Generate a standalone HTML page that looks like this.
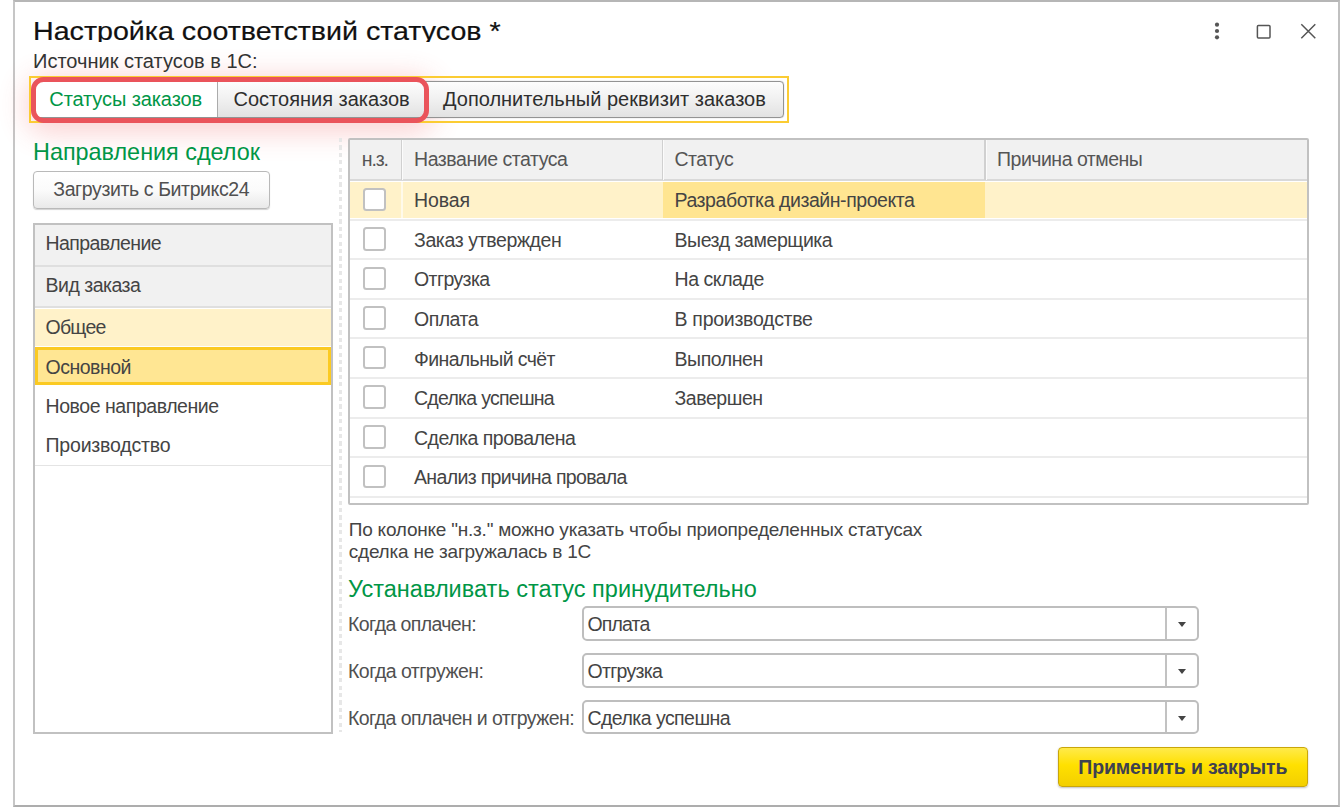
<!DOCTYPE html>
<html lang="ru"><head><meta charset="utf-8"><title>Настройка соответствий статусов</title>
<style>
html,body{margin:0;padding:0;background:#fff}
body{width:1340px;height:807px;position:relative;overflow:hidden;font-family:"Liberation Sans",sans-serif}
div{box-sizing:border-box}
.t{position:absolute;white-space:nowrap;line-height:1}
.win{position:absolute;left:13px;top:0;width:1326.5px;height:807px;border-style:solid;border-width:2px;border-color:#b6b6b6 #c0c0c0 #adadad #c6c6c6;background:#fff}
.title{position:absolute;left:32.6px;top:16px;height:26.3px;width:700px;overflow:hidden;font-size:26.5px;line-height:30px;color:#111;white-space:nowrap}
.title span{display:inline-block;transform:scaleX(1.080);transform-origin:0 0;-webkit-text-stroke:0.2px #111}
.glow{position:absolute;left:34px;top:80px;width:392px;height:40px;border-radius:12px;box-shadow:0 5px 28px 8px rgba(238,70,70,.24)}
.tabfocus{position:absolute;left:28.5px;top:76px;width:760.5px;height:47px;border:2px solid #fbcc33}
.tabs{position:absolute;left:33px;top:81px;width:751px;height:37px;border:1px solid #939393;border-radius:4px;overflow:hidden;background:linear-gradient(#fdfdfd,#efefef 55%,#e2e2e2);box-shadow:0 0 1px rgba(0,0,0,.4)}
.tab{position:absolute;top:0;height:100%}
.t1{left:0;width:184px;background:#fff;border-right:1px solid #ababab}
.t2{left:184px;width:208px;border-right:1px solid #ababab}
.t3{left:392px;right:0}
.red{position:absolute;left:31px;top:76.5px;width:398px;height:46.2px;border:5px solid #ea545b;border-radius:12.5px}
.btn{position:absolute;border:1px solid #b9b9b9;border-radius:4px;background:linear-gradient(#ffffff,#fbfbfb 50%,#e9e9e9);box-shadow:0 1px 1px rgba(0,0,0,.18)}
.list{position:absolute;left:33px;top:223px;width:299.5px;height:510.5px;border:2px solid #c1c1c1;background:#fff}
.lh{position:absolute;left:0;right:0;background:#f1f1f1;border-bottom:2px solid #dfdfdf}
.lsel1{position:absolute;left:0;right:0;background:#fff2c9}
.lsel2{position:absolute;left:0;right:0;background:#ffe693;border:3px solid #fbca22}
.lline{position:absolute;left:0;right:0;height:1px;background:#e4e4e4}
.vsep{position:absolute;left:339px;top:137.5px;width:3px;height:594.5px;background:repeating-linear-gradient(to bottom,#e7e7e7 0,#e7e7e7 4.2px,transparent 4.2px,transparent 7.4px)}
.grid{position:absolute;left:348px;top:138px;width:960.5px;height:367px;border:2px solid #c1c1c1;border-radius:2px;background:#fff;overflow:hidden}
.gh{position:absolute;left:0;right:0;top:0;height:41px;background:#f1f1f1;border-bottom:2px solid #d9d9d9}
.gsel{position:absolute;left:0;right:0;top:41.7px;height:36.3px;background:#fff2c9}
.gcell{position:absolute;left:313px;width:322px;top:41.7px;height:36.3px;background:#ffe591}
.gline{position:absolute;left:0;right:0;height:2px;background:#ececec}
.gcs{position:absolute;top:0;height:39.5px;width:1.5px;background:#d0d0d0;box-shadow:1px 0 0 #fbfbfb}
.gvs{position:absolute;top:41.7px;height:36.3px;width:1.5px;background:#fffaea}
.cb{position:absolute;width:23px;height:23.5px;border:2px solid #c1c1c1;border-radius:3.5px;background:#fff}
.inp{position:absolute;left:582px;width:616.5px;height:34px;border:2px solid #bebebe;border-radius:5px;background:#fff}
.dd{position:absolute;right:29.5px;top:0;bottom:0;width:2px;background:#c2c2c2}
.arr{position:absolute;right:11px;top:14px;width:0;height:0;border-left:4.3px solid transparent;border-right:4.3px solid transparent;border-top:5px solid #444}
.apply{position:absolute;left:1058px;top:747px;width:250px;height:39.5px;border:1px solid #c9a60a;border-radius:4px;background:linear-gradient(#ffea4a,#ffe000 45%,#f3cf00);box-shadow:0 1px 2px rgba(0,0,0,.25)}
.ico{position:absolute}
</style></head>
<body>
<div class="win"></div>
<div class="glow"></div>
<div class="title"><span>Настройка соответствий статусов *</span></div>
<div class="t " style="left:33px;top:51px;font-size:20px;color:#333;letter-spacing:0px;">Источник статусов в 1С:</div>
<div class="tabfocus"></div>
<div class="tabs"><div class="tab t1"></div><div class="tab t2"></div><div class="tab t3"></div></div>
<div class="t " style="left:49.3px;top:89px;font-size:20px;color:#009646;letter-spacing:-0.1px;">Статусы заказов</div>
<div class="t " style="left:233.5px;top:89px;font-size:20px;color:#2e2e2e;letter-spacing:0px;">Состояния заказов</div>
<div class="t " style="left:443px;top:89px;font-size:20px;color:#2e2e2e;letter-spacing:0px;">Дополнительный реквизит заказов</div>
<div class="red"></div>
<div class="t " style="left:33px;top:141px;font-size:23.4px;color:#009646;letter-spacing:0px;">Направления сделок</div>
<div class="btn" style="left:33px;top:170.5px;width:237px;height:38.5px"></div>
<div class="t " style="left:53.25px;top:180px;font-size:19.5px;color:#505050;letter-spacing:-0.39px;">Загрузить с Битрикс24</div>
<div class="list"><div class="lh" style="top:0;height:41.5px"></div><div class="lh" style="top:41.5px;height:41.5px"></div><div class="lsel1" style="top:84px;height:37.3px"></div><div class="lsel2" style="top:122.4px;height:37.6px"></div><div class="lline" style="top:240px"></div></div>
<div class="t " style="left:45.5px;top:234px;font-size:19.5px;color:#444;letter-spacing:-0.57px;">Направление</div>
<div class="t " style="left:45.5px;top:276px;font-size:19.5px;color:#444;letter-spacing:-0.5px;">Вид заказа</div>
<div class="t " style="left:45.5px;top:318px;font-size:19.5px;color:#444;letter-spacing:-0.75px;">Общее</div>
<div class="t " style="left:45.5px;top:358px;font-size:19.5px;color:#444;letter-spacing:-0.5px;">Основной</div>
<div class="t " style="left:45.5px;top:397px;font-size:19.5px;color:#444;letter-spacing:-0.44px;">Новое направление</div>
<div class="t " style="left:45.5px;top:436px;font-size:19.5px;color:#444;letter-spacing:-0.19px;">Производство</div>
<div class="vsep"></div>
<div class="grid"><div class="gh"></div><div class="gsel"></div><div class="gcell"></div><div class="gline" style="top:78.6px"></div><div class="gline" style="top:118.2px"></div><div class="gline" style="top:157.8px"></div><div class="gline" style="top:197.4px"></div><div class="gline" style="top:237.0px"></div><div class="gline" style="top:276.6px"></div><div class="gline" style="top:316.2px"></div><div class="gline" style="top:355.8px"></div><div class="gcs" style="left:50.5px"></div><div class="gcs" style="left:311.5px"></div><div class="gcs" style="left:634px"></div><div class="gvs" style="left:51px"></div></div>
<div class="t " style="left:361.75px;top:150px;font-size:19.5px;color:#555;letter-spacing:-1.1px;">н.з.</div>
<div class="t " style="left:414px;top:150px;font-size:19.5px;color:#555;letter-spacing:-0.45px;">Название статуса</div>
<div class="t " style="left:674.5px;top:150px;font-size:19.5px;color:#555;letter-spacing:-0.5px;">Статус</div>
<div class="t " style="left:997px;top:150px;font-size:19.5px;color:#555;letter-spacing:-0.49px;">Причина отмены</div>
<div class="cb" style="left:362.7px;top:187.60px"></div>
<div class="t " style="left:414px;top:191px;font-size:19.5px;color:#444;letter-spacing:-0.1px;">Новая</div>
<div class="t " style="left:674.5px;top:191px;font-size:19.5px;color:#444;letter-spacing:-0.44px;">Разработка дизайн-проекта</div>
<div class="cb" style="left:362.7px;top:227.17px"></div>
<div class="t " style="left:414px;top:231px;font-size:19.5px;color:#444;letter-spacing:-0.38px;">Заказ утвержден</div>
<div class="t " style="left:674.5px;top:231px;font-size:19.5px;color:#444;letter-spacing:-0.44px;">Выезд замерщика</div>
<div class="cb" style="left:362.7px;top:266.74px"></div>
<div class="t " style="left:414px;top:270px;font-size:19.5px;color:#444;letter-spacing:-0.6px;">Отгрузка</div>
<div class="t " style="left:674.5px;top:270px;font-size:19.5px;color:#444;letter-spacing:-0.44px;">На складе</div>
<div class="cb" style="left:362.7px;top:306.31px"></div>
<div class="t " style="left:414px;top:310px;font-size:19.5px;color:#444;letter-spacing:-0.5px;">Оплата</div>
<div class="t " style="left:674.5px;top:310px;font-size:19.5px;color:#444;letter-spacing:-0.28px;">В производстве</div>
<div class="cb" style="left:362.7px;top:345.88px"></div>
<div class="t " style="left:414px;top:350px;font-size:19.5px;color:#444;letter-spacing:-0.62px;">Финальный счёт</div>
<div class="t " style="left:674.5px;top:350px;font-size:19.5px;color:#444;letter-spacing:-0.44px;">Выполнен</div>
<div class="cb" style="left:362.7px;top:385.45px"></div>
<div class="t " style="left:414px;top:389px;font-size:19.5px;color:#444;letter-spacing:-0.73px;">Сделка успешна</div>
<div class="t " style="left:674.5px;top:389px;font-size:19.5px;color:#444;letter-spacing:-0.44px;">Завершен</div>
<div class="cb" style="left:362.7px;top:425.02px"></div>
<div class="t " style="left:414px;top:429px;font-size:19.5px;color:#444;letter-spacing:-0.5px;">Сделка провалена</div>
<div class="cb" style="left:362.7px;top:464.59px"></div>
<div class="t " style="left:414px;top:468px;font-size:19.5px;color:#444;letter-spacing:-0.65px;">Анализ причина провала</div>
<div class="t " style="left:348.75px;top:520px;font-size:19px;color:#444;letter-spacing:-0.22px;">По колонке "н.з." можно указать чтобы приопределенных статусах</div>
<div class="t " style="left:348.75px;top:542px;font-size:19px;color:#444;letter-spacing:-0.22px;">сделка не загружалась в 1С</div>
<div class="t " style="left:348px;top:578px;font-size:23.5px;color:#009646;letter-spacing:0.03px;">Устанавливать статус принудительно</div>
<div class="inp" style="top:606px;height:35px"><div class="dd"></div><div class="arr"></div></div>
<div class="t " style="left:348px;top:615px;font-size:19.5px;color:#505050;letter-spacing:-0.6px;">Когда оплачен:</div>
<div class="t " style="left:587.5px;top:615px;font-size:19.5px;color:#444;letter-spacing:-0.87px;">Оплата</div>
<div class="inp" style="top:653px;height:35px"><div class="dd"></div><div class="arr"></div></div>
<div class="t " style="left:348px;top:662px;font-size:19.5px;color:#505050;letter-spacing:-0.52px;">Когда отгружен:</div>
<div class="t " style="left:587.5px;top:662px;font-size:19.5px;color:#444;letter-spacing:-0.7px;">Отгрузка</div>
<div class="inp" style="top:700px;height:34px"><div class="dd"></div><div class="arr"></div></div>
<div class="t " style="left:348px;top:709px;font-size:19.5px;color:#505050;letter-spacing:-0.55px;">Когда оплачен и отгружен:</div>
<div class="t " style="left:587.5px;top:709px;font-size:19.5px;color:#444;letter-spacing:-0.55px;">Сделка успешна</div>
<div class="apply"></div>
<div class="t " style="left:1078.3px;top:758px;font-size:19.5px;color:#3e4150;letter-spacing:-0.13px;font-weight:bold;">Применить и закрыть</div>
<svg class="ico" style="left:1205px;top:18px" width="120" height="28" viewBox="0 0 120 28">
<circle cx="12" cy="6.7" r="2.1" fill="#555"/><circle cx="12" cy="13" r="2.1" fill="#555"/><circle cx="12" cy="19.3" r="2.1" fill="#555"/>
<rect x="52.4" y="7.5" width="12.6" height="12.6" rx="1" fill="none" stroke="#555" stroke-width="1.5"/>
<path d="M96.3 6.3 L110.3 20.3 M110.3 6.3 L96.3 20.3" stroke="#555" stroke-width="1.5" fill="none"/>
</svg>
</body></html>
